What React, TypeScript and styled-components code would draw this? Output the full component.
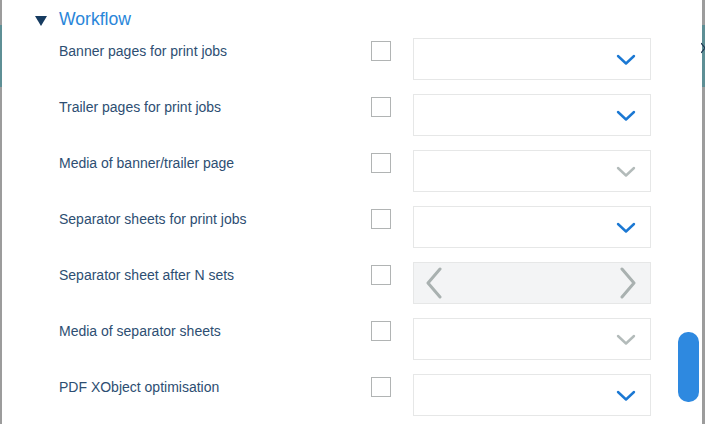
import React from 'react';
import styled, { createGlobalStyle } from 'styled-components';

const GlobalStyle = createGlobalStyle`
  html, body {
    margin: 0;
    padding: 0;
  }
  body {
    font-family: "Liberation Sans", Arial, sans-serif;
    background: linear-gradient(
      to bottom,
      #9c9c9c 0,
      #9c9c9c 25px,
      #5e8f95 25px,
      #5e8f95 87px,
      #9c9c9c 87px
    );
    height: 424px;
    overflow: hidden;
  }
`;

type Row = { label: string; kind: 'select' | 'disabled' | 'stepper' };

const rows: Row[] = [
  { label: 'Banner pages for print jobs', kind: 'select' },
  { label: 'Trailer pages for print jobs', kind: 'select' },
  { label: 'Media of banner/trailer page', kind: 'disabled' },
  { label: 'Separator sheets for print jobs', kind: 'select' },
  { label: 'Separator sheet after N sets', kind: 'stepper' },
  { label: 'Media of separator sheets', kind: 'disabled' },
  { label: 'PDF XObject optimisation', kind: 'select' },
];

const ChevronDown = ({ color }: { color: string }) => (
  <svg width="20" height="12" viewBox="0 0 20 12">
    <path d="M2 2 L10 9.5 L18 2" fill="none" stroke={color} strokeWidth="2.4" strokeLinecap="round" strokeLinejoin="round" />
  </svg>
);

const ChevronSide = ({ dir }: { dir: 'left' | 'right' }) => (
  <svg width="18" height="32" viewBox="0 0 18 32">
    <path
      d={dir === 'left' ? 'M15 2 L3 16 L15 30' : 'M3 2 L15 16 L3 30'}
      fill="none"
      stroke="#a9b1b0"
      strokeWidth="3"
      strokeLinecap="round"
      strokeLinejoin="round"
    />
  </svg>
);

const App = () => {
  return (
    <>
      <GlobalStyle />
      <Screen>
        <Dialog>
          <Header>
            <Triangle />
            <Title>Workflow</Title>
          </Header>
          <List>
            {rows.map((row) => (
              <SettingRow key={row.label}>
                <Label>{row.label}</Label>
                <Checkbox />
                {row.kind === 'stepper' ? (
                  <Stepper>
                    <ChevronSide dir="left" />
                    <ChevronSide dir="right" />
                  </Stepper>
                ) : (
                  <Select>
                    <ChevronDown color={row.kind === 'disabled' ? '#b3bbba' : '#1b78d3'} />
                  </Select>
                )}
              </SettingRow>
            ))}
          </List>
          <ScrollThumb />
        </Dialog>
        <EdgeGlyph width="4" height="12" viewBox="0 0 4 12">
          <path d="M0 1 L4 6 L0 11" fill="none" stroke="#1e3550" strokeWidth="1.2" />
        </EdgeGlyph>
      </Screen>
    </>
  );
};

export default App;

const Screen = styled.div`
  position: relative;
  display: flex;
  height: 424px;
  padding-left: 2px;
`;

const Dialog = styled.div`
  position: relative;
  width: 700px;
  height: 424px;
  background: #ffffff;
  overflow: hidden;
`;

const Header = styled.div`
  display: flex;
  align-items: center;
  height: 22px;
  padding: 8px 0 0 33px;
  margin-bottom: 8px;
`;

const Triangle = styled.div`
  width: 0;
  height: 0;
  border-left: 6px solid transparent;
  border-right: 6px solid transparent;
  border-top: 10px solid #163b60;
  margin: 4px 12px 0 0;
`;

const Title = styled.div`
  font-size: 17.6px;
  line-height: 22px;
  color: #2a86d9;
`;

const List = styled.div`
  display: flex;
  flex-direction: column;
  padding-left: 57px;
`;

const SettingRow = styled.div`
  display: grid;
  grid-template-columns: 290px 20px 238px;
  column-gap: 22px;
  align-items: start;
  height: 56px;
`;

const Label = styled.div`
  font-size: 14px;
  line-height: 16px;
  color: #2d4e72;
  margin-top: 5px;
`;

const Checkbox = styled.div`
  box-sizing: border-box;
  width: 20px;
  height: 20px;
  margin-top: 3px;
  border: 1.5px solid #b1b4b4;
  background: #ffffff;
`;

const Select = styled.div`
  box-sizing: border-box;
  height: 42px;
  border: 1px solid #e6e7e7;
  display: flex;
  align-items: center;
  justify-content: flex-end;
  padding: 2px 14px 0 0;
`;

const Stepper = styled.div`
  box-sizing: border-box;
  height: 42px;
  border: 1px solid #e6e7e7;
  background: #f3f4f5;
  display: flex;
  align-items: center;
  justify-content: space-between;
  padding: 0 13px 0 11px;
`;

const ScrollThumb = styled.div`
  position: absolute;
  left: 676px;
  top: 332px;
  width: 21px;
  height: 70px;
  border-radius: 10px;
  background: #2e89e0;
`;

const EdgeGlyph = styled.svg`
  position: absolute;
  left: 701px;
  top: 42px;
`;
